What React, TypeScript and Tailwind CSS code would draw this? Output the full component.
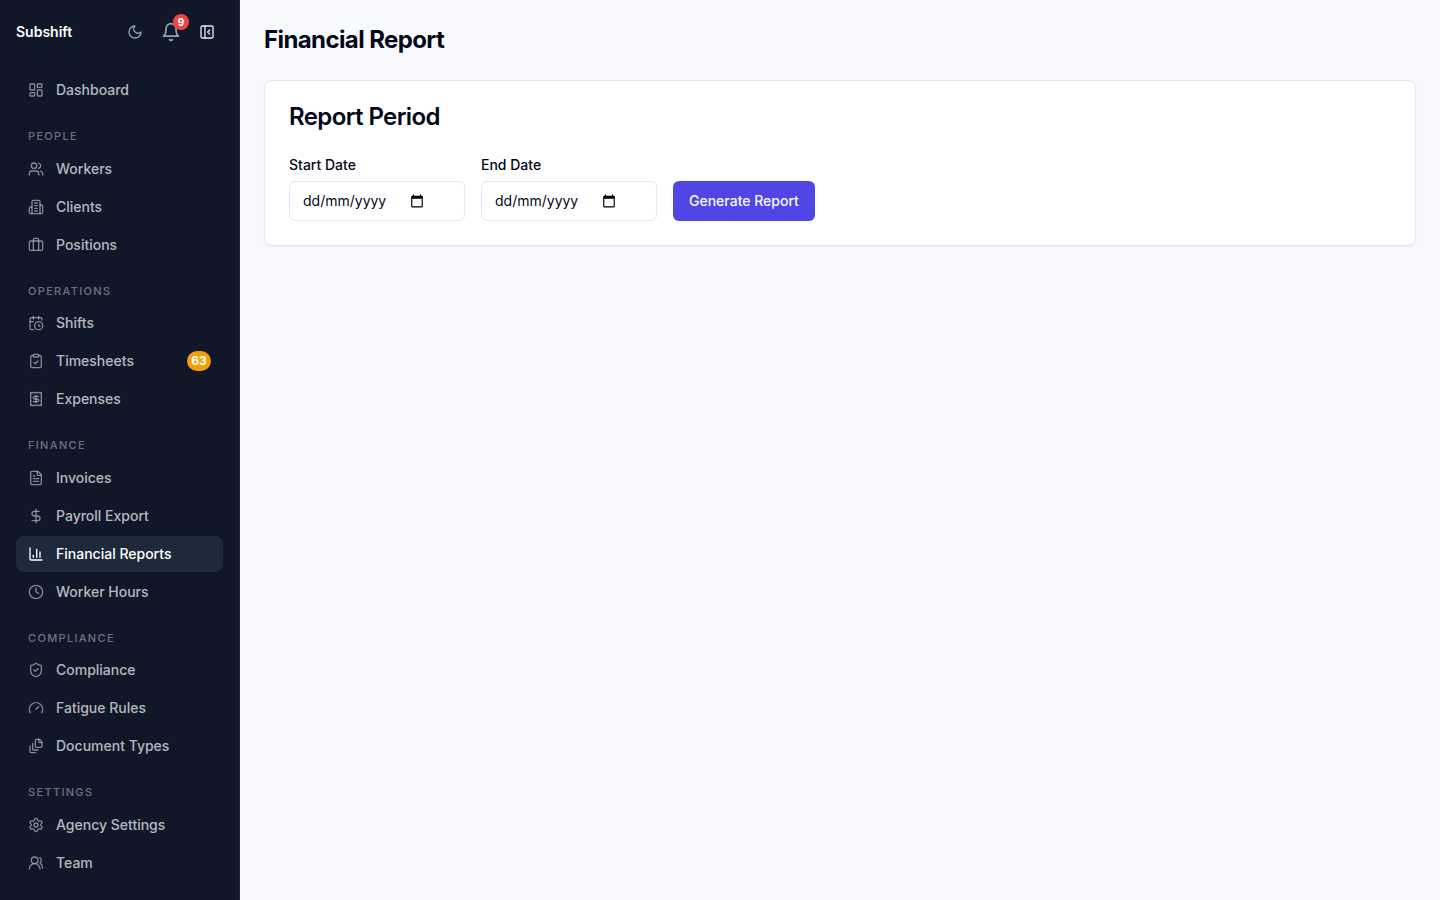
import React from 'react';
import {
    Briefcase,
    CalendarClock,
    ChartColumn,
    ClipboardCheck,
    Clock,
    DollarSign,
    FileText,
    Gauge,
    LayoutDashboard,
    PanelLeftClose,
    Receipt,
    Settings,
    ShieldCheck,
    Users,
    UsersRound,
} from 'lucide-react';

type IconProps = { className?: string; strokeWidth?: number };

type NavItem = { name: string; href: string; icon: React.ComponentType<IconProps>; badge?: string };

// Stroke icons on the same 24px grid as lucide
function strokeIcon(paths: string[]) {
    return function Icon({ className, strokeWidth = 2 }: IconProps) {
        return (
            <svg
                viewBox="0 0 24 24"
                fill="none"
                stroke="currentColor"
                strokeWidth={strokeWidth}
                strokeLinecap="round"
                strokeLinejoin="round"
                className={className}
                aria-hidden="true"
            >
                {paths.map((d) => (
                    <path key={d} d={d} />
                ))}
            </svg>
        );
    };
}

const MoonIcon = strokeIcon(['M12 3a6 6 0 0 0 9 9 9 9 0 1 1-9-9Z']);

const BellIcon = strokeIcon([
    'M6 8a6 6 0 0 1 12 0c0 7 3 9 3 9H3s3-2 3-9',
    'M10.3 21a1.94 1.94 0 0 0 3.4 0',
]);

const BuildingIcon = strokeIcon([
    'M6 22V4a2 2 0 0 1 2-2h8a2 2 0 0 1 2 2v18Z',
    'M6 12H4a2 2 0 0 0-2 2v6a2 2 0 0 0 2 2h2',
    'M18 9h2a2 2 0 0 1 2 2v9a2 2 0 0 1-2 2h-2',
    'M10 6h4',
    'M10 10h4',
    'M10 14h4',
    'M10 18h4',
]);

const FileStackIcon = strokeIcon([
    'M21 7h-3a2 2 0 0 1-2-2V2',
    'M21 6v6.5c0 .8-.7 1.5-1.5 1.5h-7c-.8 0-1.5-.7-1.5-1.5v-9c0-.8.7-1.5 1.5-1.5H17Z',
    'M7 8v8.8c0 .3.2.6.4.8.2.2.5.4.8.4H15',
    'M3 12v8.8c0 .3.2.6.4.8.2.2.5.4.8.4H11',
]);

const NAV_SECTIONS: { title: string; items: NavItem[] }[] = [
    {
        title: 'People',
        items: [
            { name: 'Workers', href: '#workers', icon: Users },
            { name: 'Clients', href: '#clients', icon: BuildingIcon },
            { name: 'Positions', href: '#positions', icon: Briefcase },
        ],
    },
    {
        title: 'Operations',
        items: [
            { name: 'Shifts', href: '#shifts', icon: CalendarClock },
            { name: 'Timesheets', href: '#timesheets', icon: ClipboardCheck, badge: '63' },
            { name: 'Expenses', href: '#expenses', icon: Receipt },
        ],
    },
    {
        title: 'Finance',
        items: [
            { name: 'Invoices', href: '#invoices', icon: FileText },
            { name: 'Payroll Export', href: '#payroll', icon: DollarSign },
            { name: 'Financial Reports', href: '#reports', icon: ChartColumn },
            { name: 'Worker Hours', href: '#hours', icon: Clock },
        ],
    },
    {
        title: 'Compliance',
        items: [
            { name: 'Compliance', href: '#compliance', icon: ShieldCheck },
            { name: 'Fatigue Rules', href: '#fatigue', icon: Gauge },
            { name: 'Document Types', href: '#documents', icon: FileStackIcon },
        ],
    },
    {
        title: 'Settings',
        items: [
            { name: 'Agency Settings', href: '#agency', icon: Settings },
            { name: 'Team', href: '#team', icon: UsersRound },
        ],
    },
];

const ACTIVE_HREF = '#reports';

function NavLink({ item }: { item: NavItem }) {
    const active = item.href === ACTIVE_HREF;
    const Icon = item.icon;
    return (
        <a
            href={item.href}
            className={`flex h-9 items-center gap-3 rounded-lg px-3 text-sm font-medium ${active
                ? 'bg-[#1e293b] text-white'
                : 'text-white/70 hover:bg-[#1e293b]/50'
                }`}
        >
            <Icon className={`size-4 shrink-0 ${active ? '' : 'opacity-70'}`} />
            <span>{item.name}</span>
            {item.badge && (
                <span className="ml-auto flex h-5 min-w-6 items-center justify-center rounded-full bg-[#f59e0b] px-1 text-xs font-bold text-white">
                    {item.badge}
                </span>
            )}
        </a>
    );
}

function Sidebar() {
    return (
        <aside className="flex h-screen w-60 shrink-0 flex-col border-r border-[#1e293b] bg-[#101729]">
            <div className="flex h-16 shrink-0 items-center justify-between px-4">
                <span className="text-sm font-semibold text-white">Subshift</span>
                <div className="flex items-center gap-1">
                    <button aria-label="Toggle theme" className="flex size-8 items-center justify-center text-[#94a3b8]">
                        <MoonIcon className="size-4" />
                    </button>
                    <button aria-label="Notifications" className="relative flex size-8 items-center justify-center text-[#94a3b8]">
                        <BellIcon className="size-5" />
                        <span className="absolute -top-0.5 -right-0.5 flex size-4 items-center justify-center rounded-full bg-[#ef4444] text-[10px] font-bold text-white">
                            9
                        </span>
                    </button>
                    <button aria-label="Collapse sidebar" className="flex size-8 items-center justify-center text-white/90">
                        <PanelLeftClose className="size-4" />
                    </button>
                </div>
            </div>

            <nav className="min-h-0 flex-1 overflow-hidden px-4 pt-2">
                <NavLink item={{ name: 'Dashboard', href: '#dashboard', icon: LayoutDashboard }} />
                {NAV_SECTIONS.map((section) => (
                    <div key={section.title}>
                        <p className="px-3 pt-5 pb-1.5 text-[11px] leading-normal font-medium tracking-[0.12em] text-white/40 uppercase">
                            {section.title}
                        </p>
                        <div className="flex flex-col gap-0.5">
                            {section.items.map((item) => (
                                <NavLink key={item.href} item={item} />
                            ))}
                        </div>
                    </div>
                ))}
            </nav>
        </aside>
    );
}

function DateField({ id, label }: { id: string; label: string }) {
    return (
        <div className="flex flex-col">
            <label htmlFor={id} className="pb-1 text-sm leading-6 font-medium">
                {label}
            </label>
            <div className="flex h-10 w-44 items-center rounded-md border border-[#e2e8f0] bg-white px-3">
                <input
                    id={id}
                    type="text"
                    inputMode="numeric"
                    placeholder="dd/mm/yyyy"
                    className="w-27 pl-px text-sm outline-none placeholder:text-[#020817]"
                />
                <button aria-label={`Pick ${label.toLowerCase()}`} className="text-black">
                    <svg viewBox="0 0 24 24" fill="currentColor" className="size-3.5">
                        <path d="M20 3h-1V1h-2v2H7V1H5v2H4c-1.1 0-2 .9-2 2v16c0 1.1.9 2 2 2h16c1.1 0 2-.9 2-2V5c0-1.1-.9-2-2-2zm0 18H4V8h16v13z" />
                    </svg>
                </button>
            </div>
        </div>
    );
}

export default function App() {
    return (
        <div className="flex min-h-screen bg-[#f8f9fd] font-['Inter',sans-serif] text-[#020817]">
            <Sidebar />
            <main className="flex-1 p-6">
                <h1 className="text-2xl font-bold tracking-tight">Financial Report</h1>
                <section className="mt-6 rounded-lg border border-[#e2e8f0] bg-white p-6 shadow-xs">
                    <h2 className="text-2xl leading-6 font-semibold tracking-tight">Report Period</h2>
                    <div className="mt-6 flex items-end gap-4">
                        <DateField id="start-date" label="Start Date" />
                        <DateField id="end-date" label="End Date" />
                        <button className="h-10 rounded-md bg-[#4f46e5] px-4 text-sm font-medium text-slate-50">
                            Generate Report
                        </button>
                    </div>
                </section>
            </main>
        </div>
    );
}
